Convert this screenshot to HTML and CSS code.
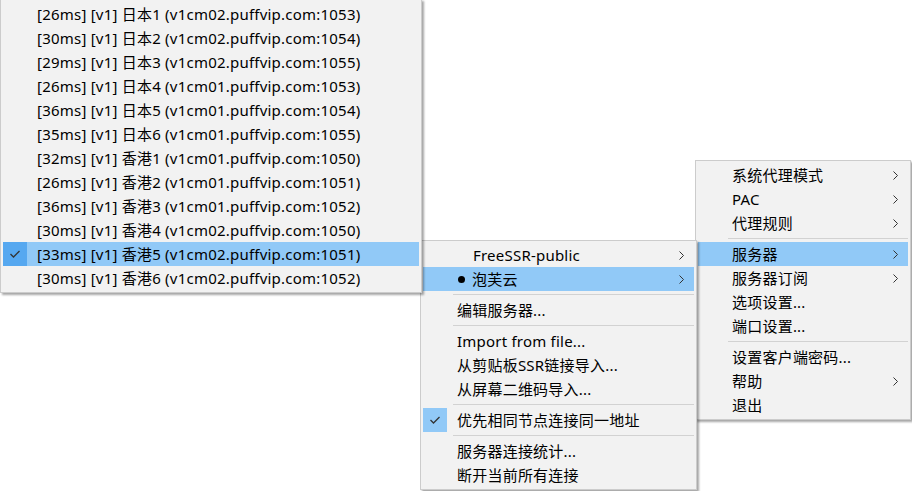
FILE: index.html
```html
<!DOCTYPE html>
<html lang="zh-CN">
<head>
<meta charset="utf-8">
<title>ShadowsocksR menu</title>
<link rel="stylesheet" href="styles.css">
</head>
<body>
<div class="desk">
  <div class="menu m3">
    <div class="item"><span class="chk"></span><span class="lbl">系统代理模式</span><span class="arr"><svg width="5" height="9" viewBox="0 0 5 9"><polyline points="0.5,0.5 4.5,4.5 0.5,8.5" fill="none" stroke="#333" stroke-width="1"/></svg></span></div>
    <div class="item"><span class="chk"></span><span class="lbl">PAC</span><span class="arr"><svg width="5" height="9" viewBox="0 0 5 9"><polyline points="0.5,0.5 4.5,4.5 0.5,8.5" fill="none" stroke="#333" stroke-width="1"/></svg></span></div>
    <div class="item"><span class="chk"></span><span class="lbl">代理规则</span><span class="arr"><svg width="5" height="9" viewBox="0 0 5 9"><polyline points="0.5,0.5 4.5,4.5 0.5,8.5" fill="none" stroke="#333" stroke-width="1"/></svg></span></div>
    <div class="sep"></div>
    <div class="item hl"><span class="chk"></span><span class="lbl">服务器</span><span class="arr"><svg width="5" height="9" viewBox="0 0 5 9"><polyline points="0.5,0.5 4.5,4.5 0.5,8.5" fill="none" stroke="#333" stroke-width="1"/></svg></span></div>
    <div class="item"><span class="chk"></span><span class="lbl">服务器订阅</span><span class="arr"><svg width="5" height="9" viewBox="0 0 5 9"><polyline points="0.5,0.5 4.5,4.5 0.5,8.5" fill="none" stroke="#333" stroke-width="1"/></svg></span></div>
    <div class="item"><span class="chk"></span><span class="lbl">选项设置...</span></div>
    <div class="item"><span class="chk"></span><span class="lbl">端口设置...</span></div>
    <div class="sep"></div>
    <div class="item"><span class="chk"></span><span class="lbl">设置客户端密码...</span></div>
    <div class="item"><span class="chk"></span><span class="lbl">帮助</span><span class="arr"><svg width="5" height="9" viewBox="0 0 5 9"><polyline points="0.5,0.5 4.5,4.5 0.5,8.5" fill="none" stroke="#333" stroke-width="1"/></svg></span></div>
    <div class="item"><span class="chk"></span><span class="lbl">退出</span></div>
  </div>

  <div class="menu m2">
    <div class="item"><span class="chk"></span><span class="lbl"><span class="gap"></span>FreeSSR-public</span><span class="arr"><svg width="5" height="9" viewBox="0 0 5 9"><polyline points="0.5,0.5 4.5,4.5 0.5,8.5" fill="none" stroke="#333" stroke-width="1"/></svg></span></div>
    <div class="item hl"><span class="chk"></span><span class="lbl"><span class="dot"></span>泡芙云</span><span class="arr"><svg width="5" height="9" viewBox="0 0 5 9"><polyline points="0.5,0.5 4.5,4.5 0.5,8.5" fill="none" stroke="#333" stroke-width="1"/></svg></span></div>
    <div class="sep"></div>
    <div class="item"><span class="chk"></span><span class="lbl">编辑服务器...</span></div>
    <div class="sep"></div>
    <div class="item"><span class="chk"></span><span class="lbl">Import from file...</span></div>
    <div class="item"><span class="chk"></span><span class="lbl">从剪贴板SSR链接导入...</span></div>
    <div class="item"><span class="chk"></span><span class="lbl">从屏幕二维码导入...</span></div>
    <div class="sep"></div>
    <div class="item checked"><span class="chk"><svg width="24" height="24" viewBox="0 0 24 24"><polyline points="7.5,12 10.5,15 16.5,9" fill="none" stroke="#333" stroke-width="1.3"/></svg></span><span class="lbl">优先相同节点连接同一地址</span></div>
    <div class="sep"></div>
    <div class="item"><span class="chk"></span><span class="lbl">服务器连接统计...</span></div>
    <div class="item"><span class="chk"></span><span class="lbl">断开当前所有连接</span></div>
  </div>

  <div class="menu m1">
    <div class="item"><span class="chk"></span><span class="lbl">[26ms] [v1] 日本1 (v1cm02.puffvip.com:1053)</span></div>
    <div class="item"><span class="chk"></span><span class="lbl">[30ms] [v1] 日本2 (v1cm02.puffvip.com:1054)</span></div>
    <div class="item"><span class="chk"></span><span class="lbl">[29ms] [v1] 日本3 (v1cm02.puffvip.com:1055)</span></div>
    <div class="item"><span class="chk"></span><span class="lbl">[26ms] [v1] 日本4 (v1cm01.puffvip.com:1053)</span></div>
    <div class="item"><span class="chk"></span><span class="lbl">[36ms] [v1] 日本5 (v1cm01.puffvip.com:1054)</span></div>
    <div class="item"><span class="chk"></span><span class="lbl">[35ms] [v1] 日本6 (v1cm01.puffvip.com:1055)</span></div>
    <div class="item"><span class="chk"></span><span class="lbl">[32ms] [v1] 香港1 (v1cm01.puffvip.com:1050)</span></div>
    <div class="item"><span class="chk"></span><span class="lbl">[26ms] [v1] 香港2 (v1cm01.puffvip.com:1051)</span></div>
    <div class="item"><span class="chk"></span><span class="lbl">[36ms] [v1] 香港3 (v1cm01.puffvip.com:1052)</span></div>
    <div class="item"><span class="chk"></span><span class="lbl">[30ms] [v1] 香港4 (v1cm02.puffvip.com:1050)</span></div>
    <div class="item hl checked"><span class="chk"><svg width="24" height="24" viewBox="0 0 24 24"><polyline points="7.5,12 10.5,15 16.5,9" fill="none" stroke="#333" stroke-width="1.3"/></svg></span><span class="lbl">[33ms] [v1] 香港5 (v1cm02.puffvip.com:1051)</span></div>
    <div class="item"><span class="chk"></span><span class="lbl">[30ms] [v1] 香港6 (v1cm02.puffvip.com:1052)</span></div>
  </div>
</div>
</body>
</html>
```

FILE: styles.css
```css
* { box-sizing: border-box; }
html, body {
  margin: 0;
  padding: 0;
  background: #ffffff;
}
.desk {
  position: relative;
  width: 912px;
  height: 491px;
  overflow: hidden;
  font-family: "Noto Sans", "Noto Sans CJK SC", sans-serif;
  font-size: 15px;
  color: #000;
}
.menu {
  position: absolute;
  display: flex;
  flex-direction: column;
  background: #f2f2f2;
  border: 1px solid #cccccc;
  padding: 2px;
  box-shadow: 2px 2px 2px rgba(0, 0, 0, 0.35);
}
.m1 { left: 0; top: -1px; width: 422px; }
.m2 { left: 420px; top: 240px; width: 277px; }
.m3 { left: 695px; top: 160px; width: 216px; }

.item {
  display: flex;
  align-items: center;
  height: 24px;
  white-space: nowrap;
}
.item.hl { background: #91c9f7; }
.chk {
  flex: 0 0 24px;
  width: 24px;
  height: 24px;
  margin-right: 10px;
  display: flex;
}
.checked .chk { background: #91c9f7; }
.hl.checked .chk { background: #56a8f0; }
.lbl {
  flex: 1;
  display: flex;
  align-items: center;
  line-height: 24px;
  letter-spacing: 0.22px;
}
.arr {
  flex: 0 0 auto;
  display: flex;
  align-items: center;
  margin-right: 10px;
}
.sep {
  height: 7px;
  margin-left: 30px;
  position: relative;
}
.sep::before {
  content: "";
  display: block;
  margin-top: 3px;
  height: 1px;
  background: #d2d2d2;
}
.gap { display: inline-block; width: 16px; }
.dot {
  display: inline-block;
  width: 7px;
  height: 7px;
  border-radius: 50%;
  background: #000;
  margin: 0 7px 0 1px;
}
```
